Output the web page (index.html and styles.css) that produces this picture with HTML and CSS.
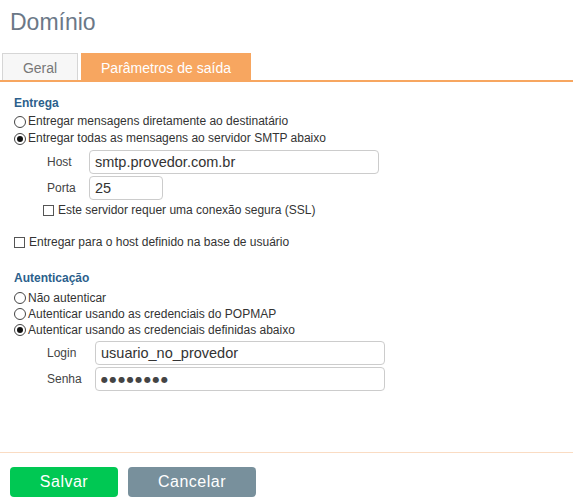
FILE: index.html
```html
<!DOCTYPE html>
<html lang="pt-BR">
<head>
    <meta charset="UTF-8">
    <meta name="viewport" content="width=device-width, initial-scale=1.0">
    <title>Domínio</title>
    <link rel="stylesheet" href="styles.css">
</head>
<body>
    <h1 class="title">Domínio</h1>

    <div class="tabs">
        <a href="#" class="tab">Geral</a>
        <a href="#" class="tab current">Parâmetros de saída</a>
    </div>

    <div class="panel">
        <h2 class="section">Entrega</h2>
        <label class="option"><input type="radio" name="entrega"> Entregar mensagens diretamente ao destinatário</label>
        <label class="option"><input type="radio" name="entrega" checked> Entregar todas as mensagens ao servidor SMTP abaixo</label>

        <div class="field first">
            <span class="field-label">Host</span>
            <input type="text" class="text wide" value="smtp.provedor.com.br">
        </div>
        <div class="field">
            <span class="field-label">Porta</span>
            <input type="text" class="text short" value="25">
        </div>
        <label class="option sub"><input type="checkbox"> Este servidor requer uma conexão segura (SSL)</label>

        <label class="option spaced"><input type="checkbox"> Entregar para o host definido na base de usuário</label>

        <h2 class="section auth">Autenticação</h2>
        <label class="option tight"><input type="radio" name="auth"> Não autenticar</label>
        <label class="option tight"><input type="radio" name="auth"> Autenticar usando as credenciais do POPMAP</label>
        <label class="option tight"><input type="radio" name="auth" checked> Autenticar usando as credenciais definidas abaixo</label>

        <div class="field first login">
            <span class="field-label">Login</span>
            <input type="text" class="text wide" value="usuario_no_provedor">
        </div>
        <div class="field login">
            <span class="field-label">Senha</span>
            <input type="text" class="text wide secret" value="●●●●●●●●" readonly>
        </div>
    </div>

    <div class="footer">
        <button class="button save">Salvar</button>
        <button class="button cancel">Cancelar</button>
    </div>
</body>
</html>
```

FILE: styles.css
```css
body {
    font-family: 'Liberation Sans', Arial, sans-serif;
    background-color: #fff;
    color: #333;
    margin: 0;
    padding: 0;
}
.title {
    margin: 0;
    padding: 9px 0 0 10px;
    height: 44px;
    box-sizing: border-box;
    font-size: 23px;
    font-weight: normal;
    color: #6b7887;
    line-height: 26px;
}
.tabs {
    display: flex;
    gap: 3px;
    padding: 0 0 0 2px;
    margin-top: 9px;
    border-bottom: 2px solid #f7a660;
}
.tab {
    display: block;
    height: 27px;
    line-height: 28px;
    box-sizing: border-box;
    font-size: 14px;
    text-decoration: none;
    text-align: center;
    color: #777;
    background: #f7f7f7;
    border: 1px solid #d6d6d6;
    border-bottom: none;
    width: 76px;
}
.tab.current {
    width: 170px;
    color: #fff;
    background: #f7a660;
    border-color: #f7a660;
}
.panel {
    padding: 13px 0 0 14px;
    height: 362px;
    box-sizing: border-box;
    font-size: 12px;
}
.section {
    margin: 0 0 1px;
    font-size: 12px;
    font-weight: bold;
    line-height: 17px;
    color: #2c5f8c;
}
.section.auth {
    margin-top: 19px;
    margin-bottom: 3px;
}
.option {
    display: flex;
    align-items: center;
    gap: 2px;
    line-height: 17px;
    color: #333;
}
.option.tight {
    line-height: 16px;
}
.option.sub {
    margin: 2px 0 0 29px;
}
.option.spaced {
    margin-top: 15px;
}
input[type="radio"], input[type="checkbox"] {
    appearance: none;
    margin: 0;
    width: 12px;
    height: 12px;
    border: 1px solid #444;
    background: #fff;
    box-sizing: border-box;
    flex: none;
}
input[type="radio"] {
    border-radius: 50%;
    display: grid;
    place-items: center;
}
input[type="radio"]:checked::after {
    content: "";
    width: 6px;
    height: 6px;
    border-radius: 50%;
    background: #111;
}
input[type="checkbox"] {
    width: 11px;
    height: 11px;
    border-color: #555;
    margin-right: 2px;
}
.field {
    display: flex;
    align-items: center;
    margin-top: 2px;
    padding-left: 33px;
}
.field.first {
    margin-top: 3px;
}
.field-label {
    width: 42px;
    font-size: 12px;
    color: #444;
}
.field.login .field-label {
    width: 48px;
}
.text {
    height: 24px;
    box-sizing: border-box;
    border: 1px solid #ccc;
    border-radius: 4px;
    padding: 0 5px;
    font-family: 'Liberation Sans', Arial, sans-serif;
    font-size: 14.5px;
    color: #333;
    outline: none;
}
.text.wide {
    width: 290px;
}
.text.short {
    width: 74px;
}
.text.secret {
    font-family: 'DejaVu Sans', sans-serif;
    font-size: 8px;
    letter-spacing: 1.6px;
    color: #444;
}
.footer {
    border-top: 1px solid #fadcc3;
    margin-top: 8px;
    padding: 14px 0 0 10px;
    display: flex;
    gap: 10px;
}
.button {
    height: 30px;
    border: none;
    border-radius: 4px;
    color: #fff;
    font-family: 'Liberation Sans', Arial, sans-serif;
    font-size: 16px;
    letter-spacing: 0.5px;
    cursor: pointer;
}
.save {
    width: 108px;
    background: #00c853;
}
.cancel {
    width: 128px;
    background: #78909c;
}
```
